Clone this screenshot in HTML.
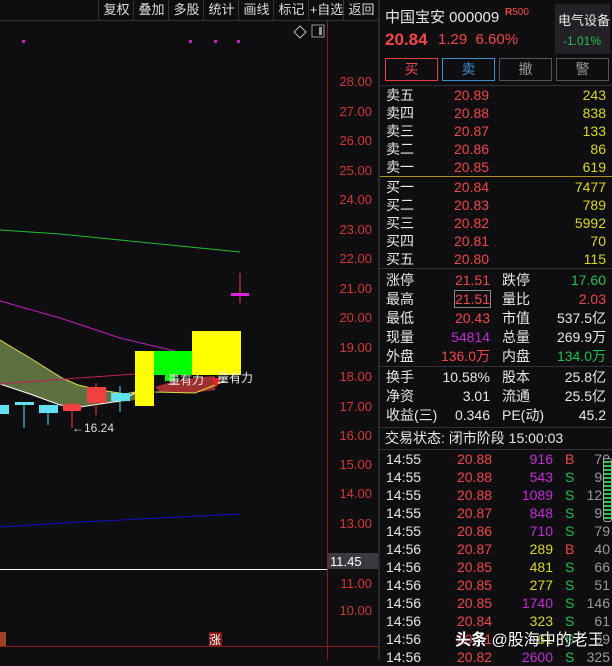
<!DOCTYPE html><html><head><meta charset="utf-8"><style>
body{margin:0;width:612px;height:660px;background:#0e0d10;overflow:hidden;font-family:"Liberation Sans","Noto Sans CJK SC",sans-serif;position:relative;color:#ddd}
.a{position:absolute;white-space:nowrap}
.tb{position:absolute;top:0;height:20px;font-size:13px;color:#ddd;line-height:20px;border-left:1px solid #333;text-align:center}
.ax{position:absolute;left:328px;width:44px;text-align:right;color:#d03838;font-size:13px}
.r{position:absolute;font-size:14px;line-height:18px}
.w{color:#e8e8e8}.rd{color:#f04848}.y{color:#d8d820}.g{color:#20c050}.p{color:#c030d0}.gr{color:#999}
</style></head><body>
<div class="tb" style="left:98px;width:35px">复权</div>
<div class="tb" style="left:133px;width:35px">叠加</div>
<div class="tb" style="left:168px;width:35px">多股</div>
<div class="tb" style="left:203px;width:35px">统计</div>
<div class="tb" style="left:238px;width:35px">画线</div>
<div class="tb" style="left:273px;width:35px">标记</div>
<div class="tb" style="left:308px;width:35px">+自选</div>
<div class="tb" style="left:343px;width:35px">返回</div>
<div class="a" style="left:0;top:20px;width:378px;height:1px;background:#333"></div>
<svg class="a" style="left:0;top:0" width="380" height="660">
<rect x="22" y="40" width="3" height="3" fill="#c020c0"/><rect x="189" y="40" width="3" height="3" fill="#c020c0"/><rect x="214" y="40" width="3" height="3" fill="#c020c0"/><rect x="237" y="40" width="3" height="3" fill="#c020c0"/>
<path d="M300 26l6 6-6 6-6-6z" fill="none" stroke="#bbb"/><rect x="312" y="25" width="12" height="12" fill="none" stroke="#999"/><rect x="319" y="27" width="3" height="8" fill="#999"/>
<line x1="327.5" y1="21" x2="327.5" y2="660" stroke="#8a1a1a"/>
<line x1="0" y1="646.5" x2="378" y2="646.5" stroke="#8a1a1a"/>
<path d="M0 230 L60 234 L120 240 L180 246 L240 252" stroke="#20c030" fill="none"/>
<path d="M0 301 L60 318 L120 338 L175 351" stroke="#c020c0" fill="none"/>
<path d="M0 340 L30 358 L62 378 L78 385 L100 390 L125 394 L135 392 L135 400 L120 402 L100 404 L80 407 L60 405 L30 394 L0 384Z" fill="#5c7040"/>
<path d="M0 340 L30 358 L62 378 L78 385 L100 390 L125 394 L135 392" stroke="#e0e040" fill="none"/>
<path d="M0 384 L30 394 L60 405 L80 407 L100 404 L120 401 L135 393" stroke="#fff" fill="none"/>
<path d="M0 384 L65 379 L135 374 L200 370" stroke="#c02060" fill="none"/>
<path d="M155 387 Q180 378 215 376 L215 390 L190 393 L160 392Z" fill="#a03030"/>
<path d="M155 392 L195 393 L225 381" stroke="#e0e040" fill="none"/>
<rect x="0" y="405" width="9" height="9" fill="#60e0f0"/>
<line x1="24" y1="403" x2="24" y2="428" stroke="#60e0f0"/><rect x="15" y="402" width="19" height="3" fill="#60e0f0"/>
<line x1="48" y1="405" x2="48" y2="425" stroke="#60e0f0"/><rect x="39" y="405" width="19" height="8" fill="#60e0f0"/>
<line x1="72" y1="401" x2="72" y2="428" stroke="#f04040"/><rect x="63" y="404" width="18" height="7" fill="#f04040"/>
<line x1="96" y1="383" x2="96" y2="415" stroke="#f04040"/><rect x="87" y="387" width="19" height="16" fill="#f04040"/>
<line x1="120" y1="386" x2="120" y2="412" stroke="#60e0f0"/><rect x="111" y="393" width="19" height="8" fill="#60e0f0"/>
<rect x="135" y="351" width="19" height="55" fill="#ffff00"/>
<rect x="154" y="351" width="38" height="24" fill="#00ff00"/><rect x="165" y="375" width="10" height="6" fill="#00ff00"/>
<rect x="192" y="331" width="49" height="44" fill="#ffff00"/>
<path d="M212 378 L220 378 L216 388Z" fill="#f02020"/>
<text x="168" y="384" fill="#eee" font-size="12">量有力</text><text x="217" y="382" fill="#eee" font-size="12">量有力</text>
<line x1="240" y1="273" x2="240" y2="303" stroke="#f04040"/><rect x="231" y="293" width="18" height="3" fill="#e020e0"/>
<text x="72" y="432" fill="#ddd" font-size="12">←16.24</text>
<path d="M0 527 L80 522 L160 518 L240 514" stroke="#1010c0" fill="none"/>
<line x1="0" y1="569.5" x2="327" y2="569.5" stroke="#fff"/>
<rect x="209" y="632" width="13" height="14" fill="#801818"/><text x="209" y="644" fill="#fff" font-size="12">涨</text>
<rect x="0" y="632" width="6" height="14" fill="#a04020"/>
<rect x="328" y="553" width="50" height="16" fill="#3a3a40"/><text x="330" y="566" fill="#fff" font-size="13">11.45</text>
</svg>
<div class="ax" style="top:74px">28.00</div><div class="ax" style="top:104px">27.00</div><div class="ax" style="top:133px">26.00</div><div class="ax" style="top:163px">25.00</div><div class="ax" style="top:192px">24.00</div><div class="ax" style="top:222px">23.00</div><div class="ax" style="top:251px">22.00</div><div class="ax" style="top:281px">21.00</div><div class="ax" style="top:310px">20.00</div><div class="ax" style="top:340px">19.00</div><div class="ax" style="top:369px">18.00</div><div class="ax" style="top:399px">17.00</div><div class="ax" style="top:428px">16.00</div><div class="ax" style="top:457px">15.00</div><div class="ax" style="top:486px">14.00</div><div class="ax" style="top:516px">13.00</div><div class="ax" style="top:576px">11.00</div><div class="ax" style="top:603px">10.00</div>
<div class="a" style="left:378px;top:0;width:2px;height:660px;background:#2a2a2e"></div>
<div class="a w" style="left:385px;top:6px;font-size:15px">中国宝安 000009</div>
<div class="a" style="left:505px;top:7px;font-size:10px;color:#f04848"><b>R</b>500</div>
<div class="a" style="left:555px;top:4px;width:55px;height:50px;background:#222226"></div>
<div class="a w" style="left:558px;top:10px;font-size:13px">电气设备</div>
<div class="a g" style="left:563px;top:34px;font-size:12px">-1.01%</div>
<div class="a rd" style="left:385px;top:30px;font-size:17px;font-weight:bold">20.84</div>
<div class="a rd" style="left:438px;top:31px;font-size:15px">1.29&nbsp; 6.60%</div>
<div class="a rd" style="left:385px;top:58px;width:51px;height:21px;border:1px solid #e04040;text-align:center;font-size:14px;line-height:21px">买</div>
<div class="a" style="left:442px;top:58px;width:51px;height:21px;border:1px solid #4090d0;text-align:center;font-size:14px;line-height:21px;color:#4090d0">卖</div>
<div class="a gr" style="left:499px;top:58px;width:51px;height:21px;border:1px solid #555;text-align:center;font-size:14px;line-height:21px">撤</div>
<div class="a gr" style="left:556px;top:58px;width:51px;height:21px;border:1px solid #555;text-align:center;font-size:14px;line-height:21px">警</div>
<div class="a" style="left:380px;top:85px;width:232px;height:1px;background:#333"></div>
<div class="a" style="left:380px;top:176px;width:232px;height:1px;background:#b09020"></div>
<div class="a" style="left:380px;top:268px;width:232px;height:1px;background:#333"></div>
<div class="a" style="left:380px;top:366px;width:232px;height:1px;background:#333"></div>
<div class="a" style="left:380px;top:427px;width:232px;height:1px;background:#333"></div>
<div class="a" style="left:380px;top:449px;width:232px;height:1px;background:#333"></div>
<div class="r w" style="left:386px;top:86px;line-height:18px">卖五<br>卖四<br>卖三<br>卖二<br>卖一</div>
<div class="r rd" style="left:454px;top:86px">20.89<br>20.88<br>20.87<br>20.86<br>20.85</div>
<div class="r y" style="left:540px;top:86px;width:66px;text-align:right">243<br>838<br>133<br>86<br>619</div>
<div class="r w" style="left:386px;top:178px">买一<br>买二<br>买三<br>买四<br>买五</div>
<div class="r rd" style="left:454px;top:178px">20.84<br>20.83<br>20.82<br>20.81<br>20.80</div>
<div class="r y" style="left:540px;top:178px;width:66px;text-align:right">7477<br>789<br>5992<br>70<br>115</div>
<div class="r w" style="left:386px;top:271px;line-height:19px">涨停<br>最高<br>最低<br>现量<br>外盘</div>
<div class="r" style="left:430px;top:271px;width:60px;text-align:right;line-height:19px"><span class="rd">21.51</span><br><span class="rd" style="outline:1px solid #888">21.51</span><br><span class="rd">20.43</span><br><span class="p">54814</span><br><span class="rd">136.0万</span></div>
<div class="r w" style="left:502px;top:271px;line-height:19px">跌停<br>量比<br>市值<br>总量<br>内盘</div>
<div class="r" style="left:540px;top:271px;width:66px;text-align:right;line-height:19px"><span class="g">17.60</span><br><span class="rd">2.03</span><br><span class="w">537.5亿</span><br><span class="w">269.9万</span><br><span class="g">134.0万</span></div>
<div class="r w" style="left:386px;top:368px;line-height:19px">换手<br>净资<br>收益(三)</div>
<div class="r w" style="left:430px;top:368px;width:60px;text-align:right;line-height:19px">10.58%<br>3.01<br>0.346</div>
<div class="r w" style="left:502px;top:368px;line-height:19px">股本<br>流通<br>PE(动)</div>
<div class="r w" style="left:540px;top:368px;width:66px;text-align:right;line-height:19px">25.8亿<br>25.5亿<br>45.2</div>
<div class="r w" style="left:385px;top:429px">交易状态: 闭市阶段 15:00:03</div>
<div class="r w" style="left:386px;top:450px">14:55<br>14:55<br>14:55<br>14:55<br>14:55<br>14:56<br>14:56<br>14:56<br>14:56<br>14:56<br>14:56<br>14:56</div>
<div class="r rd" style="left:457px;top:450px">20.88<br>20.88<br>20.88<br>20.87<br>20.86<br>20.87<br>20.85<br>20.85<br>20.85<br>20.84<br>20.81<br>20.82</div>
<div class="r" style="left:510px;top:450px;width:43px;text-align:right"><span class="p">916</span><br><span class="p">543</span><br><span class="p">1089</span><br><span class="p">848</span><br><span class="p">710</span><br><span class="y">289</span><br><span class="y">481</span><br><span class="y">277</span><br><span class="p">1740</span><br><span class="y">323</span><br><span class="y">61</span><br><span class="p">2600</span></div>
<div class="r" style="left:565px;top:450px"><span class="rd">B</span><br><span class="g">S</span><br><span class="g">S</span><br><span class="g">S</span><br><span class="g">S</span><br><span class="rd">B</span><br><span class="g">S</span><br><span class="g">S</span><br><span class="g">S</span><br><span class="g">S</span><br><span class="g">S</span><br><span class="g">S</span></div>
<div class="r gr" style="left:580px;top:450px;width:30px;text-align:right;overflow:hidden">70<br>94<br>120<br>91<br>79<br>40<br>66<br>51<br>146<br>61<br>69<br>325</div>
<div class="a" style="left:603px;top:458px;width:7px;height:62px;border:1px solid #aaa;border-radius:3px;background:repeating-linear-gradient(#0e0d10 0 2px,#30c050 2px 4px)"></div>
<div class="a" style="left:455px;top:626px;font-size:16px;color:#fff;text-shadow:0 0 2px #000"><b>头条</b> @股海中的老王</div>
</body></html>
